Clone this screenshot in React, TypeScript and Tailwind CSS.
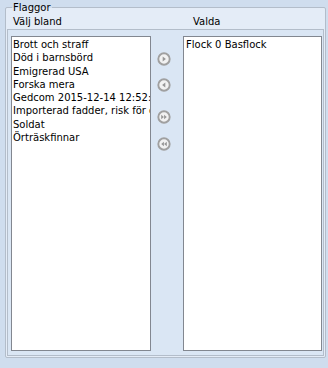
import React from "react";

const font = { fontFamily: '"DejaVu Sans", Verdana, sans-serif' };

function Btn({ kind }: { kind: "r" | "l" | "rr" | "ll" }) {
  return (
    <svg width="14" height="14" viewBox="0 0 14 14" className="block">
      <circle cx="7" cy="7" r="5.7" fill="#f2f2f2" stroke="#a0a0a0" strokeWidth="1.9" />
      {kind === "r" && <path d="M5.7 4.4 L8.9 7 L5.7 9.6 Z" fill="#979797" />}
      {kind === "l" && <path d="M8.3 4.4 L5.1 7 L8.3 9.6 Z" fill="#979797" />}
      {kind === "rr" && (
        <path d="M4.2 4.7 L6.9 7 L4.2 9.3 Z M7.1 4.7 L9.8 7 L7.1 9.3 Z" fill="#979797" />
      )}
      {kind === "ll" && (
        <path d="M9.8 4.7 L7.1 7 L9.8 9.3 Z M6.9 4.7 L4.2 7 L6.9 9.3 Z" fill="#979797" />
      )}
    </svg>
  );
}

const left = [
  "Brott och straff",
  "Död i barnsbörd",
  "Emigrerad USA",
  "Forska mera",
  "Gedcom 2015-12-14 12:52:09",
  "Importerad fadder, risk för dubblett",
  "Soldat",
  "Örträskfinnar",
];

export default function App() {
  return (
    <div
      className="w-[328px] h-[368px] bg-[#cfddee] pt-[7px] pl-[5px] text-[10px] text-black overflow-hidden"
      style={font}
    >
      <div className="relative w-[321px] h-[351px] border border-[#b3bdca] rounded-[2px] bg-[#e4ecf7] flex flex-col">
        <div className="absolute left-[6px] top-[-6px] px-[1px] h-[12px] leading-[12px] bg-[linear-gradient(to_bottom,#cfddee_50%,#e4ecf7_50%)]">
          Flaggor
        </div>
        <div className="h-[21px] flex items-end pb-[1px] leading-[12px]">
          <div className="w-[180px] pl-[7px]">Välj bland</div>
          <div className="pl-[7px]">Valda</div>
        </div>
        <div className="ml-[1px] mr-[1px] h-[327px] border border-[#b3bdca] bg-[#dae6f4] flex pt-[6px] pl-[3px]">
          <div className="w-[140px] h-[315px] border border-[#828790] bg-white pt-[1px] pl-[1px] overflow-hidden leading-[13.3px] whitespace-nowrap">
            {left.map((t) => (
              <div key={t}>{t}</div>
            ))}
          </div>
          <div className="w-[32px] flex flex-col pl-[6px] pt-[16px]">
            <Btn kind="r" />
            <div className="h-[12px]" />
            <Btn kind="l" />
            <div className="h-[18px]" />
            <Btn kind="rr" />
            <div className="h-[13px]" />
            <Btn kind="ll" />
          </div>
          <div className="w-[139px] h-[315px] border border-[#828790] bg-white pt-[1px] pl-[2px] overflow-hidden leading-[13.3px] whitespace-nowrap">
            <div>Flock 0 Basflock</div>
          </div>
        </div>
      </div>
    </div>
  );
}
